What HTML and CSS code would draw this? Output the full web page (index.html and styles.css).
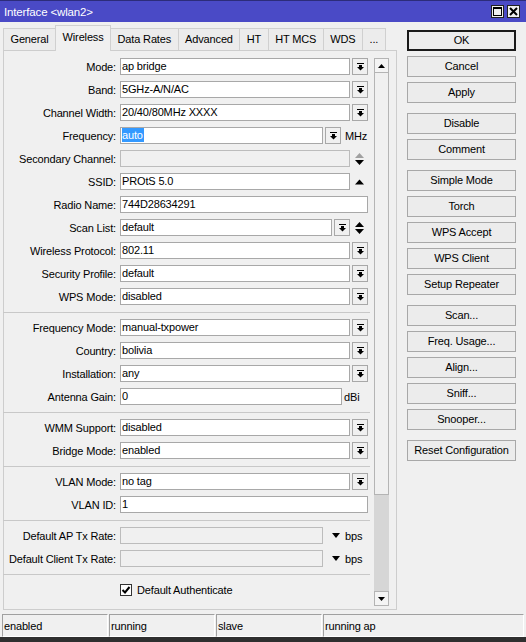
FILE: index.html
```html
<!DOCTYPE html>
<html>
<head>
<meta charset="utf-8">
<link rel="stylesheet" href="styles.css">
</head>
<body>
<div class="window">
  <div class="titlebar">
    <span class="title">Interface &lt;wlan2&gt;</span>
    <div class="wctl">
      <span class="wbtn"><svg width="9" height="9" viewBox="0 0 9 9"><rect x="0.5" y="0.5" width="8" height="8" fill="none" stroke="#000"/><rect x="0" y="0" width="9" height="2" fill="#000"/></svg></span>
      <span class="wbtn"><svg width="9" height="9" viewBox="0 0 9 9"><path d="M1 1L8 8M8 1L1 8" stroke="#000" stroke-width="2"/></svg></span>
    </div>
  </div>
  <div class="main">
    <div class="left">
      <div class="tabs">
        <div class="tab">General</div>
        <div class="tab sel">Wireless</div>
        <div class="tab">Data Rates</div>
        <div class="tab">Advanced</div>
        <div class="tab">HT</div>
        <div class="tab">HT MCS</div>
        <div class="tab">WDS</div>
        <div class="tab">...</div>
      </div>
      <div class="panel">
        <div class="form">
          <div class="row"><div class="lbl">Mode:</div><div class="inp">ap bridge</div><div class="dd"><svg class="ddi" width="7" height="8" viewBox="0 0 7 8"><rect x="0" y="0" width="7" height="1"/><rect x="2" y="2" width="3" height="2"/><path d="M0 4H7L3.5 7.5Z"/></svg></div></div>
          <div class="row"><div class="lbl">Band:</div><div class="inp">5GHz-A/N/AC</div><div class="dd"><svg class="ddi" width="7" height="8" viewBox="0 0 7 8"><rect x="0" y="0" width="7" height="1"/><rect x="2" y="2" width="3" height="2"/><path d="M0 4H7L3.5 7.5Z"/></svg></div></div>
          <div class="row"><div class="lbl">Channel Width:</div><div class="inp">20/40/80MHz XXXX</div><div class="dd"><svg class="ddi" width="7" height="8" viewBox="0 0 7 8"><rect x="0" y="0" width="7" height="1"/><rect x="2" y="2" width="3" height="2"/><path d="M0 4H7L3.5 7.5Z"/></svg></div></div>
          <div class="row"><div class="lbl">Frequency:</div><div class="inp"><span class="hl">auto</span></div><div class="dd"><svg class="ddi" width="7" height="8" viewBox="0 0 7 8"><rect x="0" y="0" width="7" height="1"/><rect x="2" y="2" width="3" height="2"/><path d="M0 4H7L3.5 7.5Z"/></svg></div><div class="unit">MHz</div></div>
          <div class="row"><div class="lbl">Secondary Channel:</div><div class="inp dis"></div><div class="aux"><svg width="9" height="12" viewBox="0 0 9 12"><path d="M0 5H9L4.5 0Z" fill="#a0a0a0"/><path d="M0 7H9L4.5 12Z" fill="#000"/></svg></div></div>
          <div class="row"><div class="lbl">SSID:</div><div class="inp">PROtS 5.0</div><div class="aux"><svg width="9" height="6" viewBox="0 0 9 6"><path d="M0 5.5H9L4.5 0.5Z" fill="#000"/></svg></div></div>
          <div class="row"><div class="lbl">Radio Name:</div><div class="inp">744D28634291</div></div>
          <div class="row"><div class="lbl">Scan List:</div><div class="inp">default</div><div class="dd"><svg class="ddi" width="7" height="8" viewBox="0 0 7 8"><rect x="0" y="0" width="7" height="1"/><rect x="2" y="2" width="3" height="2"/><path d="M0 4H7L3.5 7.5Z"/></svg></div><div class="aux"><svg width="9" height="12" viewBox="0 0 9 12"><path d="M0 5H9L4.5 0Z" fill="#000"/><path d="M0 7H9L4.5 12Z" fill="#000"/></svg></div></div>
          <div class="row"><div class="lbl">Wireless Protocol:</div><div class="inp">802.11</div><div class="dd"><svg class="ddi" width="7" height="8" viewBox="0 0 7 8"><rect x="0" y="0" width="7" height="1"/><rect x="2" y="2" width="3" height="2"/><path d="M0 4H7L3.5 7.5Z"/></svg></div></div>
          <div class="row"><div class="lbl">Security Profile:</div><div class="inp">default</div><div class="dd"><svg class="ddi" width="7" height="8" viewBox="0 0 7 8"><rect x="0" y="0" width="7" height="1"/><rect x="2" y="2" width="3" height="2"/><path d="M0 4H7L3.5 7.5Z"/></svg></div></div>
          <div class="row"><div class="lbl">WPS Mode:</div><div class="inp">disabled</div><div class="dd"><svg class="ddi" width="7" height="8" viewBox="0 0 7 8"><rect x="0" y="0" width="7" height="1"/><rect x="2" y="2" width="3" height="2"/><path d="M0 4H7L3.5 7.5Z"/></svg></div></div>
          <div class="sep"></div>
          <div class="row"><div class="lbl">Frequency Mode:</div><div class="inp">manual-txpower</div><div class="dd"><svg class="ddi" width="7" height="8" viewBox="0 0 7 8"><rect x="0" y="0" width="7" height="1"/><rect x="2" y="2" width="3" height="2"/><path d="M0 4H7L3.5 7.5Z"/></svg></div></div>
          <div class="row"><div class="lbl">Country:</div><div class="inp">bolivia</div><div class="dd"><svg class="ddi" width="7" height="8" viewBox="0 0 7 8"><rect x="0" y="0" width="7" height="1"/><rect x="2" y="2" width="3" height="2"/><path d="M0 4H7L3.5 7.5Z"/></svg></div></div>
          <div class="row"><div class="lbl">Installation:</div><div class="inp">any</div><div class="dd"><svg class="ddi" width="7" height="8" viewBox="0 0 7 8"><rect x="0" y="0" width="7" height="1"/><rect x="2" y="2" width="3" height="2"/><path d="M0 4H7L3.5 7.5Z"/></svg></div></div>
          <div class="row"><div class="lbl">Antenna Gain:</div><div class="inp">0</div><div class="unit dbi">dBi</div></div>
          <div class="sep"></div>
          <div class="row"><div class="lbl">WMM Support:</div><div class="inp">disabled</div><div class="dd"><svg class="ddi" width="7" height="8" viewBox="0 0 7 8"><rect x="0" y="0" width="7" height="1"/><rect x="2" y="2" width="3" height="2"/><path d="M0 4H7L3.5 7.5Z"/></svg></div></div>
          <div class="row"><div class="lbl">Bridge Mode:</div><div class="inp">enabled</div><div class="dd"><svg class="ddi" width="7" height="8" viewBox="0 0 7 8"><rect x="0" y="0" width="7" height="1"/><rect x="2" y="2" width="3" height="2"/><path d="M0 4H7L3.5 7.5Z"/></svg></div></div>
          <div class="sep"></div>
          <div class="row"><div class="lbl">VLAN Mode:</div><div class="inp">no tag</div><div class="dd"><svg class="ddi" width="7" height="8" viewBox="0 0 7 8"><rect x="0" y="0" width="7" height="1"/><rect x="2" y="2" width="3" height="2"/><path d="M0 4H7L3.5 7.5Z"/></svg></div></div>
          <div class="row"><div class="lbl">VLAN ID:</div><div class="inp">1</div></div>
          <div class="sep"></div>
          <div class="row"><div class="lbl">Default AP Tx Rate:</div><div class="inp dis"></div><div class="tri"><svg width="8" height="5" viewBox="0 0 8 5"><path d="M0 0H8L4 5Z" fill="#000"/></svg></div><div class="unit">bps</div></div>
          <div class="row"><div class="lbl">Default Client Tx Rate:</div><div class="inp dis"></div><div class="tri"><svg width="8" height="5" viewBox="0 0 8 5"><path d="M0 0H8L4 5Z" fill="#000"/></svg></div><div class="unit">bps</div></div>
          <div class="sep"></div>
          <div class="chk-row"><span class="chk"><svg width="10" height="10" viewBox="0 0 10 10"><path d="M1.5 5L4 7.5L8.5 2" fill="none" stroke="#000" stroke-width="2"/></svg></span><span>Default Authenticate</span></div>
        </div>
        <div class="vscroll">
          <div class="sb-btn"><svg width="7" height="4" viewBox="0 0 7 4"><path d="M0 4H7L3.5 0Z" fill="#000"/></svg></div>
          <div class="sb-thumb"></div>
          <div class="sb-track"></div>
          <div class="sb-btn"><svg width="7" height="4" viewBox="0 0 7 4"><path d="M0 0H7L3.5 4Z" fill="#000"/></svg></div>
        </div>
      </div>
    </div>
    <div class="buttons">
      <div class="btn ok">OK</div>
      <div class="btn">Cancel</div>
      <div class="btn">Apply</div>
      <div class="btn grp">Disable</div>
      <div class="btn">Comment</div>
      <div class="btn grp">Simple Mode</div>
      <div class="btn">Torch</div>
      <div class="btn">WPS Accept</div>
      <div class="btn">WPS Client</div>
      <div class="btn">Setup Repeater</div>
      <div class="btn grp">Scan...</div>
      <div class="btn">Freq. Usage...</div>
      <div class="btn">Align...</div>
      <div class="btn">Sniff...</div>
      <div class="btn">Snooper...</div>
      <div class="btn grp">Reset Configuration</div>
    </div>
  </div>
  <div class="status">
    <div class="cell">enabled</div>
    <div class="cell">running</div>
    <div class="cell">slave</div>
    <div class="cell last">running ap</div>
  </div>
  <div class="bottom"></div>
</div>
</body>
</html>
```
FILE: styles.css
```css
html, body {
  margin: 0;
  padding: 0;
}
body {
  width: 526px;
  height: 642px;
  overflow: hidden;
  background: #f0f0f0;
  font-family: "Liberation Sans", Arial, sans-serif;
  font-size: 11px;
  letter-spacing: -0.15px;
  color: #000;
}
.window {
  display: flex;
  flex-direction: column;
  height: 642px;
}
.titlebar {
  flex: none;
  height: 22px;
  box-sizing: border-box;
  background: #4a4ac6;
  border-top: 1px solid #2c2c7a;
  color: #fff;
  display: flex;
  align-items: center;
  padding: 0 6px 0 4px;
  font-size: 11.5px;
}
.wctl {
  margin-left: auto;
  display: flex;
  gap: 3px;
}
.wbtn {
  width: 13px;
  height: 13px;
  box-sizing: border-box;
  border: 1px solid #222;
  background: #f0f0f0;
  display: flex;
  align-items: center;
  justify-content: center;
}
.main {
  flex: none;
  height: 592px;
  display: flex;
  padding-left: 3px;
}
.left {
  width: 394px;
  display: flex;
  flex-direction: column;
}
.tabs {
  height: 28px;
  display: flex;
  align-items: flex-end;
}
.tab {
  height: 22px;
  box-sizing: border-box;
  padding: 0 6.5px;
  border: 1px solid #d0d0d0;
  border-bottom: none;
  margin-right: -1px;
  line-height: 21px;
  background: #ececec;
  white-space: nowrap;
}
.tab.sel {
  height: 26px;
  margin-bottom: -1px;
  line-height: 22px;
  background: #f0f0f0;
  position: relative;
  z-index: 1;
}
.panel {
  height: 560px;
  box-sizing: border-box;
  border: 1px solid #cdcdcd;
  display: flex;
  padding: 7px 7px 3px 0;
}
.form {
  width: 364px;
  margin-right: 6px;
  display: flex;
  flex-direction: column;
}
.row {
  flex: none;
  height: 17px;
  display: flex;
  align-items: center;
  margin-bottom: 6px;
}
.lbl {
  flex: none;
  width: 112px;
  margin-right: 4px;
  text-align: right;
  white-space: nowrap;
}
.inp {
  flex: 1;
  min-width: 0;
  height: 17px;
  box-sizing: border-box;
  border: 1px solid #a8a8a8;
  background: #fff;
  padding: 0 1px;
  line-height: 15px;
  white-space: nowrap;
  overflow: hidden;
}
.inp.dis {
  background: #f0f0f0;
  border-color: #bcbcbc;
}
.hl {
  background: #3399ff;
  color: #fff;
  display: inline-block;
  line-height: 14px;
  padding-right: 1px;
}
.dd {
  flex: none;
  width: 16px;
  height: 17px;
  box-sizing: border-box;
  margin-left: 2px;
  border: 1px solid #a8a8a8;
  background: #f0f0f0;
  display: flex;
  align-items: center;
  justify-content: center;
}
.ddi {
  fill: #000;
}
.aux {
  flex: none;
  width: 18px;
  height: 17px;
  display: flex;
  align-items: center;
  justify-content: center;
  padding-left: 1px;
  box-sizing: border-box;
}
.tri {
  flex: none;
  width: 18px;
  height: 17px;
  box-sizing: border-box;
  display: flex;
  align-items: center;
  justify-content: flex-end;
  padding-right: 1px;
}
.unit {
  flex: none;
  width: 27px;
  box-sizing: border-box;
  padding-left: 4px;
  white-space: nowrap;
}
.unit.dbi {
  width: 26px;
  padding-left: 2px;
}
.sep {
  flex: none;
  height: 1px;
  background: #c8c8c8;
  margin: 1px -2px 6px -1px;
}
.chk-row {
  flex: none;
  height: 17px;
  display: flex;
  align-items: center;
  padding-left: 116px;
}
.chk {
  width: 12px;
  height: 12px;
  box-sizing: border-box;
  border: 1px solid #333;
  background: #fff;
  margin-right: 5px;
  display: flex;
  align-items: center;
  justify-content: center;
}
.vscroll {
  flex: none;
  width: 15px;
  display: flex;
  flex-direction: column;
}
.sb-btn {
  flex: none;
  height: 15px;
  box-sizing: border-box;
  border: 1px solid #b4b4b4;
  background: #f4f4f4;
  display: flex;
  align-items: center;
  justify-content: center;
}
.sb-thumb {
  flex: none;
  height: 422px;
  box-sizing: border-box;
  border: 1px solid #b4b4b4;
  border-top: none;
  background: #f0f0f0;
}
.sb-track {
  flex: 1;
  background: #d6d6d6;
}
.buttons {
  width: 109px;
  margin-left: 10px;
  padding-top: 8px;
  display: flex;
  flex-direction: column;
}
.btn {
  flex: none;
  height: 21px;
  box-sizing: border-box;
  border: 1px solid #a8a8a8;
  background: #ececec;
  text-align: center;
  line-height: 19px;
  margin-top: 5px;
  white-space: nowrap;
}
.btn.ok {
  margin-top: 0;
  border: 2px solid #1a1a1a;
  line-height: 17px;
}
.btn.grp {
  margin-top: 10px;
}
.status {
  flex: none;
  height: 23px;
  display: flex;
  padding-left: 2px;
}
.cell {
  width: 106px;
  box-sizing: border-box;
  border: 1px solid;
  border-color: #a0a0a0 #ffffff #ffffff #a0a0a0;
  margin-right: 1px;
  padding-left: 1px;
  line-height: 22px;
  white-space: nowrap;
}
.cell.last {
  flex: 1;
  margin-right: 2px;
}
.bottom {
  flex: none;
  height: 5px;
  background: #2f2f2f;
}
```
